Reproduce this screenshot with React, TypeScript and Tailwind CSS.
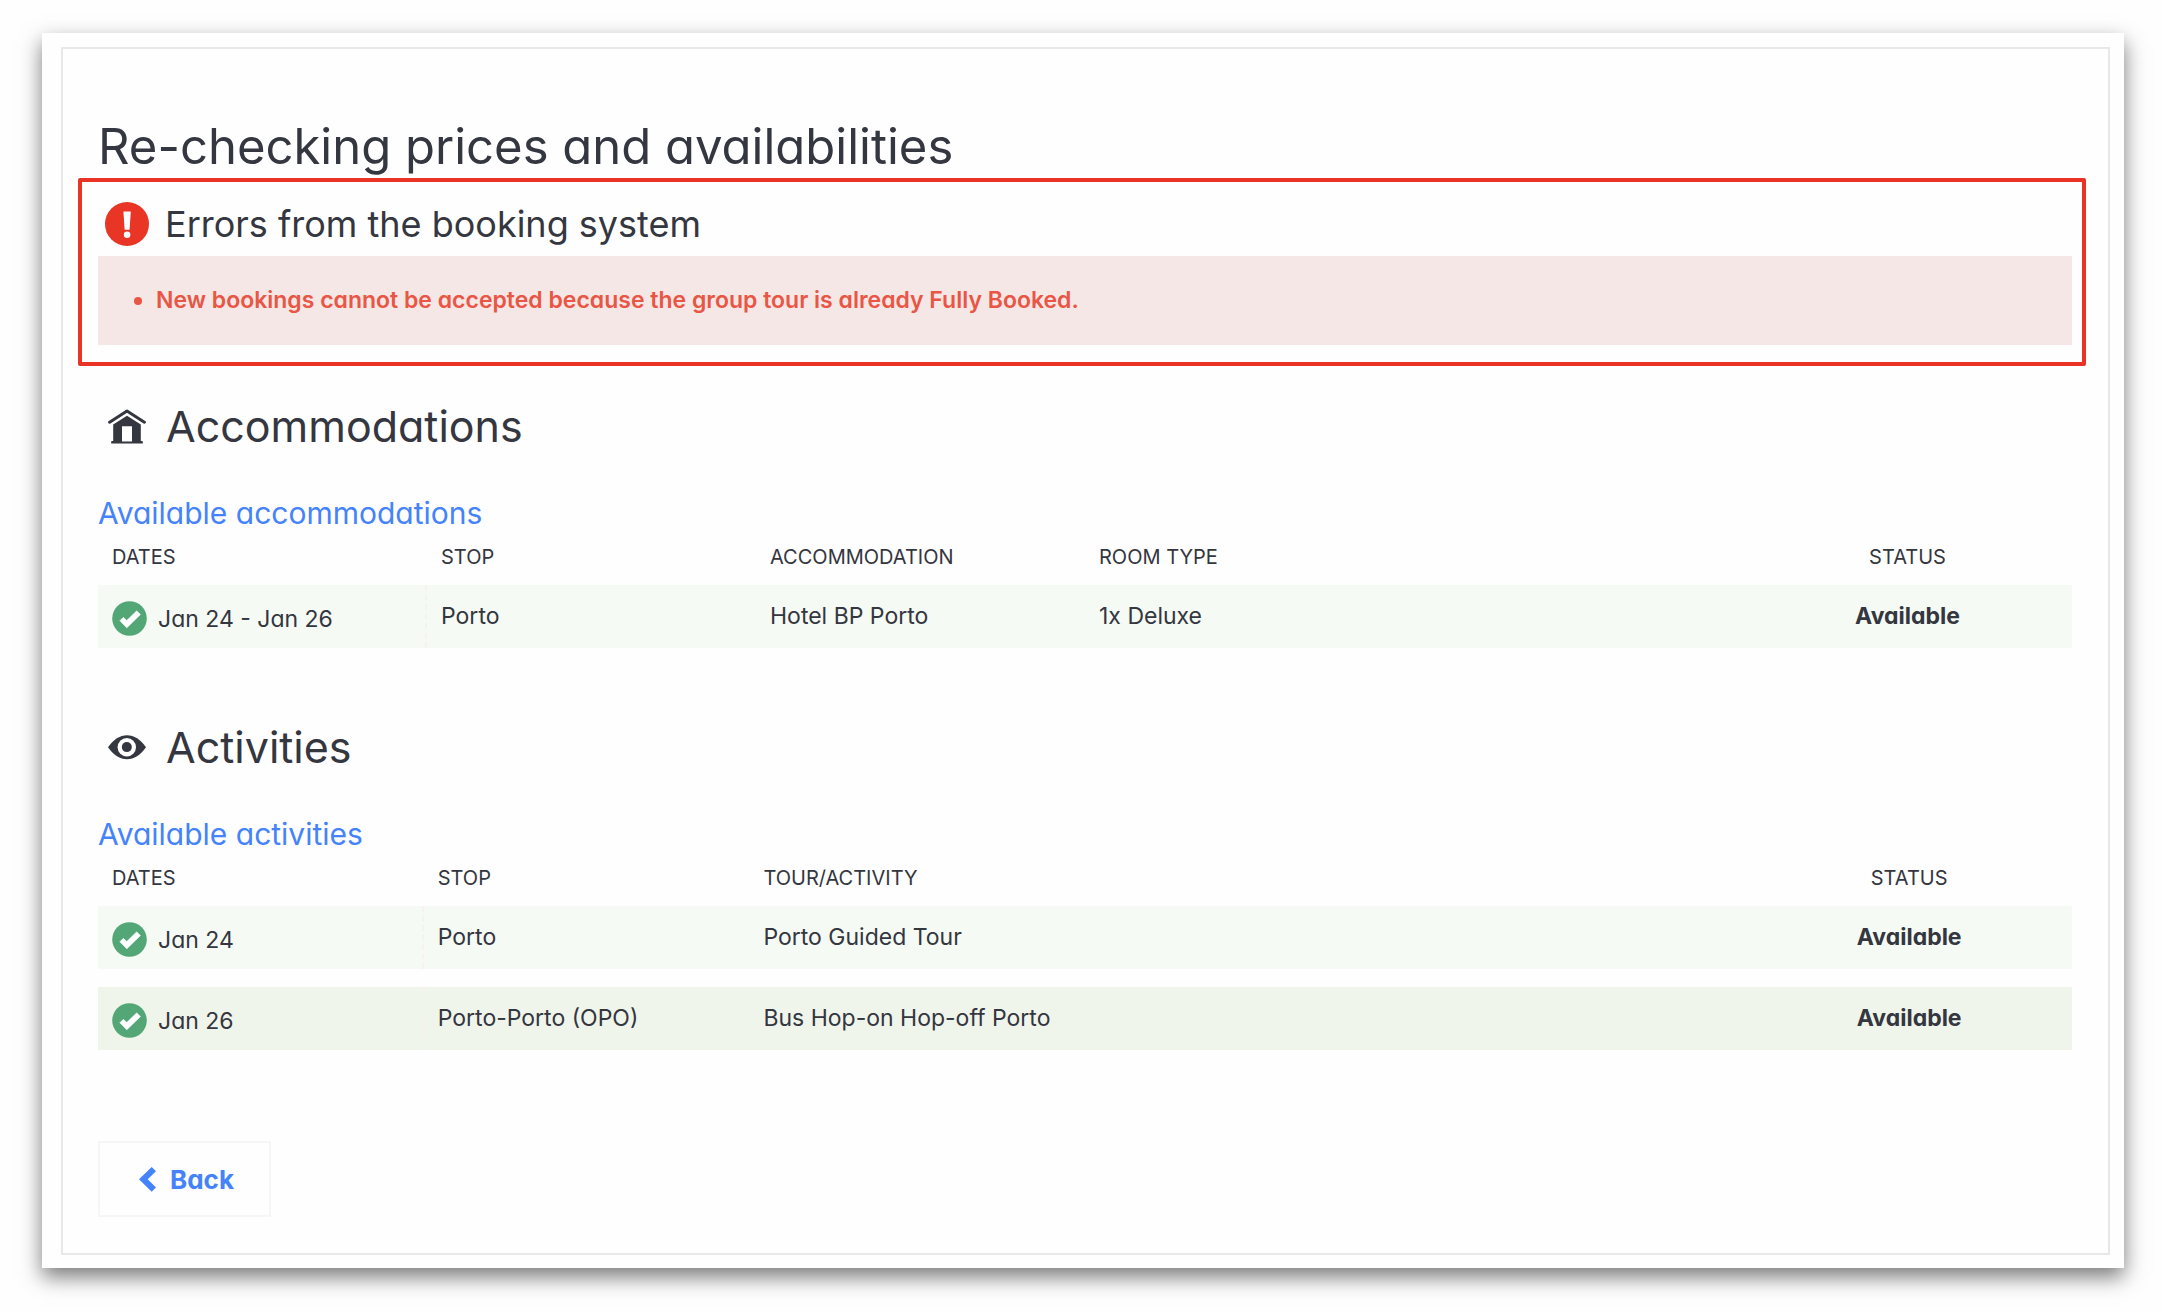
import type { ReactNode } from 'react';

type Booking = {
    dates: string;
    details: string[];
    status: string;
};

const ERRORS = [
    'New bookings cannot be accepted because the group tour is already Fully Booked.'
];

const ACCOMMODATIONS: Booking[] = [
    { dates: 'Jan 24 - Jan 26', details: ['Porto', 'Hotel BP Porto', '1x Deluxe'], status: 'Available' }
];

const ACTIVITIES: Booking[] = [
    { dates: 'Jan 24', details: ['Porto', 'Porto Guided Tour'], status: 'Available' },
    { dates: 'Jan 26', details: ['Porto-Porto (OPO)', 'Bus Hop-on Hop-off Porto'], status: 'Available' }
];

function AlertIcon() {
    return (
        <svg className="size-[44px] shrink-0" viewBox="0 0 43 43" aria-hidden="true">
            <circle cx="21.5" cy="21.5" r="21.5" fill="#e83525" />
            <path d="M18 9.2h7.2l-1.2 17.8h-4.8z" fill="#fefefe" />
            <circle cx="21.6" cy="32" r="3.2" fill="#fefefe" />
        </svg>
    );
}

function HouseIcon() {
    return (
        <svg className="w-[38px] h-[35px] shrink-0" viewBox="0 0 38 35" aria-hidden="true">
            <path d="M1.6 13.2 19 2l17.4 11.2" fill="none" stroke="#343640" strokeWidth="3" strokeLinecap="round" strokeLinejoin="round" />
            <path d="M19 6.8 32.8 15.6V32h1.2a.8.8 0 0 1 .8.8v1.6H3.2v-1.6a.8.8 0 0 1 .8-.8h1.2V15.6zM14 17.2V32.4h10V17.2z" fill="#343640" fillRule="evenodd" />
        </svg>
    );
}

function EyeIcon() {
    return (
        <svg className="w-[38px] h-[25px] shrink-0" viewBox="0 0 38 25" aria-hidden="true">
            <path d="M0 12.3C5.6 4.2 12 .3 19 .3s13.4 3.9 19 12c-5.6 8.1-12 12-19 12S5.6 20.4 0 12.3z" fill="#343640" />
            <circle cx="18.8" cy="12.3" r="9.2" fill="#fefefe" />
            <circle cx="18.8" cy="12.1" r="5" fill="#343640" />
        </svg>
    );
}

function CheckIcon() {
    return (
        <svg className="size-[35px] shrink-0" viewBox="0 0 35 35" aria-hidden="true">
            <circle cx="17.5" cy="17.5" r="17.3" fill="#53a776" />
            <path d="M8 19.7 11.3 16.4 14.8 19.6 24.7 9.9 28.3 13.6 14.8 26.7z" fill="#fff" stroke="#fff" strokeWidth=".8" strokeLinejoin="round" />
        </svg>
    );
}

function SectionTitle({ icon, children }: { icon: ReactNode; children: ReactNode }) {
    return (
        <h2 className="flex items-center gap-5 pl-[10px] text-[43px] leading-[52px]">
            {icon}
            {children}
        </h2>
    );
}

function BookingTable({ label, columns, widths, rows }: { label: string; columns: string[]; widths: string[]; rows: Booking[] }) {
    return (
        <>
            <h3 className="mt-[45px] text-[30px] leading-[32px] text-[#4583fc]">{label}</h3>
            <table aria-label={label} className="w-full table-fixed border-separate border-spacing-x-0 border-spacing-y-[18px]">
                <colgroup>
                    {widths.map((width, i) => (
                        <col key={i} className={width} />
                    ))}
                </colgroup>
                <thead>
                    <tr className="text-left text-[20px] leading-[20px] uppercase">
                        {columns.map((column) => (
                            <th key={column} scope="col" className="px-[14px] font-normal last:text-center">{column}</th>
                        ))}
                    </tr>
                </thead>
                <tbody>
                    {rows.map((row) => (
                        <tr key={row.dates} className="bg-[#f5faf4] even:bg-[#f0f5eb] align-top text-[23px] leading-[30px]">
                            <td className="border-r-2 border-dashed border-[#f7f1f1] px-[14px] pt-4 pb-3">
                                <div className="flex items-center gap-[11px]">
                                    <CheckIcon />
                                    {row.dates}
                                </div>
                            </td>
                            {row.details.map((detail) => (
                                <td key={detail} className="px-[14px] pt-4">{detail}</td>
                            ))}
                            <td className="px-[14px] pt-4 text-center font-bold">{row.status}</td>
                        </tr>
                    ))}
                </tbody>
            </table>
        </>
    );
}

export default function App() {
    return (
        <div className="flow-root bg-[#fefefe] font-['Inter','Open_Sans',sans-serif] [font-feature-settings:'cv11'] text-[#343640]">
            <div className="mt-[33px] mr-[38px] mb-[45px] ml-[42px] pt-[14px] pr-[14px] pb-[13px] pl-[19px] bg-[#fefefe] shadow-[0_9px_20px_rgba(0,0,0,0.52)]">
                <main className="border-2 border-[#e8e8e8] pt-[67px] pr-9 pb-9 pl-[35px]">
                    <h1 className="text-[49px] leading-[62px]">Re-checking prices and availabilities</h1>

                    {/* Booking system errors */}
                    <section className="-ml-5 -mr-[14px] rounded-[2px] border-4 border-[#e93324] pt-5 pr-[10px] pb-[17px] pl-4">
                        <h2 className="flex items-center gap-4 pl-[7px] text-[36px] leading-[44px]">
                            <AlertIcon />
                            Errors from the booking system
                        </h2>
                        <ul className="mt-[10px] bg-[#f5e7e5] py-7 pl-9 text-[23px] leading-[33px] font-semibold text-[#e95645]">
                            {ERRORS.map((error) => (
                                <li key={error} className="flex items-center gap-[14px]">
                                    <span className="size-2 rounded-full bg-[#e95645]" />
                                    {error}
                                </li>
                            ))}
                        </ul>
                    </section>

                    <section className="mt-[34px]">
                        <SectionTitle icon={<HouseIcon />}>Accommodations</SectionTitle>
                        <BookingTable
                            label="Available accommodations"
                            columns={['Dates', 'Stop', 'Accommodation', 'Room type', 'Status']}
                            widths={['w-1/6', 'w-1/6', 'w-1/6', 'w-1/3', 'w-1/6']}
                            rows={ACCOMMODATIONS}
                        />
                    </section>

                    <section className="mt-[55px]">
                        <SectionTitle icon={<EyeIcon />}>Activities</SectionTitle>
                        <BookingTable
                            label="Available activities"
                            columns={['Dates', 'Stop', 'Tour/Activity', 'Status']}
                            widths={['w-[16.5%]', 'w-[16.5%]', 'w-[50.5%]', 'w-[16.5%]']}
                            rows={ACTIVITIES}
                        />
                    </section>

                    <button type="button" className="mt-[73px] flex h-[76px] items-center gap-[14px] border-2 border-[#f6f6f6] pr-[35px] pl-[39px] text-[26px] font-bold text-[#4583fc]">
                        <svg className="w-[17px] h-[25px]" viewBox="0 0 17 25" fill="currentColor" aria-hidden="true">
                            <path d="M12.7 0 17 4.2 8.700 12.3 17 20.5 12.7 24.7 0 12.3z" />
                        </svg>
                        Back
                    </button>
                </main>
            </div>
        </div>
    );
}
